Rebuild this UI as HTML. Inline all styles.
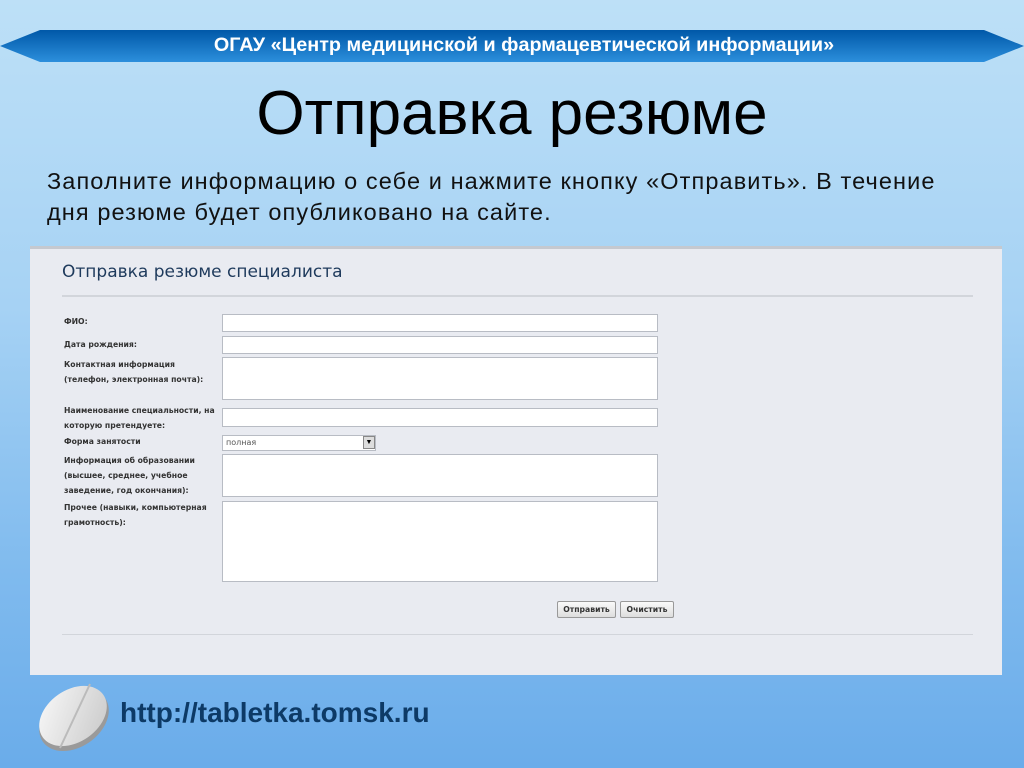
<!DOCTYPE html>
<html><head><meta charset="utf-8"><style>
*{margin:0;padding:0;box-sizing:border-box}
body{width:1024px;height:768px;overflow:hidden;position:relative;background:linear-gradient(#bde0f7 0%,#a6d2f4 40%,#7fbaee 75%,#6aacea 100%);font-family:"Liberation Sans",Arial,sans-serif}
.abs{position:absolute}
.lbl{position:absolute;left:64px;font-family:"DejaVu Sans",sans-serif;font-size:7.7px;font-weight:bold;color:#333;line-height:15px;white-space:nowrap}
.in{position:absolute;left:222px;width:436px;background:#fff;border:1px solid #b8bcc4}
</style></head><body>
<svg class="abs" style="left:0;top:29px" width="1024" height="34">
<defs><linearGradient id="g" x1="0" y1="0" x2="0" y2="1"><stop offset="0" stop-color="#0058a8"/><stop offset="1" stop-color="#2c8fdc"/></linearGradient></defs>
<polygon points="0,17 40,1 984,1 1024,17 984,33 40,33" fill="url(#g)"/>
</svg>
<div class="abs" style="left:12px;width:1024px;top:34px;text-align:center;color:#fff;font-weight:bold;font-size:19.8px;">ОГАУ «Центр медицинской и фармацевтической информации»</div>
<div class="abs" style="left:0;width:1024px;top:78px;text-align:center;font-size:62px;color:#000">Отправка резюме</div>
<div class="abs" style="left:47px;top:166px;font-size:23.5px;letter-spacing:1.1px;line-height:31px;color:#111;width:960px;white-space:nowrap">Заполните информацию о себе и нажмите кнопку «Отправить». В течение<br>дня резюме будет опубликовано на сайте.</div>
<div class="abs" style="left:30px;top:246px;width:972px;height:429px;background:#e9ebf1;border-top:3px solid #c5c9d0"></div>
<div class="abs" style="left:62px;top:262px;font-family:'DejaVu Sans',sans-serif;font-size:17px;color:#1e3a5c">Отправка резюме специалиста</div>
<div class="abs" style="left:62px;top:295px;width:911px;height:2px;background:#d2d5db"></div>
<div class="lbl" style="top:314px">ФИО:</div>
<div class="lbl" style="top:337px">Дата рождения:</div>
<div class="lbl" style="top:357px">Контактная информация<br>(телефон, электронная почта):</div>
<div class="lbl" style="top:403px">Наименование специальности, на<br>которую претендуете:</div>
<div class="lbl" style="top:434px">Форма занятости</div>
<div class="lbl" style="top:453px">Информация об образовании<br>(высшее, среднее, учебное<br>заведение, год окончания):</div>
<div class="lbl" style="top:500px">Прочее (навыки, компьютерная<br>грамотность):</div>
<div class="in" style="top:314px;height:18px"></div>
<div class="in" style="top:336px;height:18px"></div>
<div class="in" style="top:357px;height:43px"></div>
<div class="in" style="top:408px;height:19px"></div>
<div class="abs" style="left:222px;top:435px;width:154px;height:16px;background:#fff;border:1px solid #b8bcc4;font-family:'DejaVu Sans',sans-serif;font-size:8px;color:#555;padding:2px 3px">полная</div>
<div class="abs" style="left:363px;top:436px;width:12px;height:13px;background:#ddd;border:1px solid #888;font-size:7px;text-align:center;line-height:11px">▼</div>
<div class="in" style="top:454px;height:43px"></div>
<div class="in" style="top:501px;height:81px"></div>
<div class="abs" style="left:557px;top:601px;width:59px;height:17px;background:linear-gradient(#fafafa,#ddd);border:1px solid #999;border-radius:2px;font-family:'DejaVu Sans',sans-serif;font-size:7.7px;font-weight:bold;color:#333;text-align:center;line-height:15px">Отправить</div>
<div class="abs" style="left:620px;top:601px;width:54px;height:17px;background:linear-gradient(#fafafa,#ddd);border:1px solid #999;border-radius:2px;font-family:'DejaVu Sans',sans-serif;font-size:7.7px;font-weight:bold;color:#333;text-align:center;line-height:15px">Очистить</div>
<div class="abs" style="left:62px;top:634px;width:911px;height:1px;background:#d2d5db"></div>
<svg class="abs" style="left:32px;top:678px" width="84" height="76">
<defs><linearGradient id="p" x1="0" y1="0" x2="1" y2="1"><stop offset="0" stop-color="#fafafa"/><stop offset="1" stop-color="#c8c8c8"/></linearGradient></defs>
<ellipse cx="42" cy="42" rx="38" ry="27" transform="rotate(-35 42 42)" fill="#9a9a9a"/>
<ellipse cx="41" cy="38" rx="37" ry="26" transform="rotate(-35 41 38)" fill="url(#p)"/>
<line x1="58" y1="6" x2="28" y2="70" stroke="#bbb" stroke-width="2"/>
</svg>
<div class="abs" style="left:120px;top:697px;font-size:28px;font-weight:bold;color:#0d3a66">http://tabletka.tomsk.ru</div>
</body></html>
